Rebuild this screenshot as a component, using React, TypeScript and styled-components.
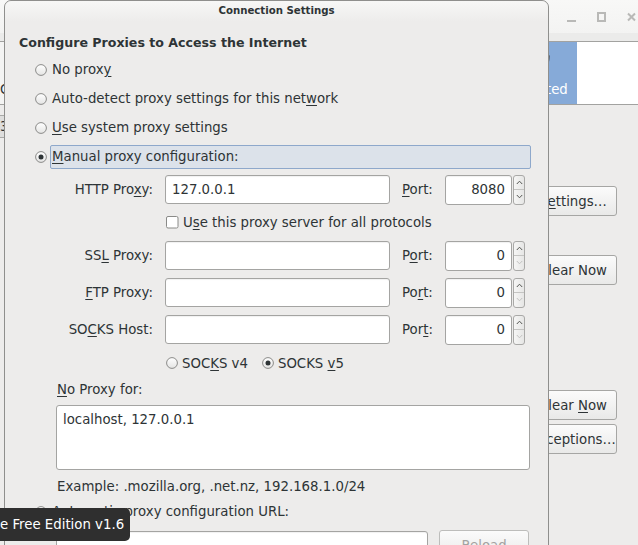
import React from 'react';
import styled, { createGlobalStyle } from 'styled-components';

const GlobalStyle = createGlobalStyle`
  html, body { margin: 0; padding: 0; }
  body {
    font-family: "DejaVu Sans", "Liberation Sans", sans-serif;
    font-size: 13.3px;
    color: #2e3436;
    background: #edeceb;
  }
`;

const Screen = styled.div`
  position: relative;
  width: 638px;
  height: 545px;
  overflow: hidden;
`;

/* ---------- background window ---------- */

const BgWindow = styled.div`
  display: flex;
  flex-direction: column;
  width: 638px;
  height: 545px;
  background: #edeceb;
`;

const BgTitle = styled.div`
  height: 33px;
  background: linear-gradient(#f8f8f7, #f3f3f2);
  display: flex;
  justify-content: flex-end;
  align-items: center;
  gap: 21px;
  padding-right: 2px;
`;

const BgStrip = styled.div`
  height: 8px;
  background: #ebebea;
`;

const BgList = styled.div`
  height: 62px;
  border-top: 1px solid #a2a2a0;
  border-bottom: 1px solid #a2a2a0;
  background: #fff;
  display: flex;
`;

const BgItem = styled.div<{ $selected?: boolean }>`
  width: ${p => (p.$selected ? '82px' : 'auto')};
  flex: ${p => (p.$selected ? 'none' : '1')};
  display: flex;
  flex-direction: column;
  align-items: ${p => (p.$selected ? 'center' : 'flex-start')};
  justify-content: flex-end;
  padding-bottom: 7px;
  gap: 3px;
  background: ${p => (p.$selected ? '#86aad8' : '#f4f4f3')};
  color: ${p => (p.$selected ? '#fff' : '#2e3436')};
`;

const BgBlank = styled.div`
  width: 61px;
  background: #fff;
`;

const BgBody = styled.div`
  flex: 1;
  display: flex;
`;

const BgMain = styled.div`
  flex: 1;
  padding-top: 10px;
`;

const BgTab = styled.div`
  width: 60px;
  height: 21px;
  border: 1px solid #a9a9a7;
  border-left: none;
  background: #dededd;
  line-height: 21px;
`;

const BgSide = styled.div`
  width: 88px;
  padding-right: 21px;
  display: flex;
  flex-direction: column;
`;

const Button = styled.div<{ $top: number; $disabled?: boolean }>`
  margin-top: ${p => p.$top}px;
  height: 28px;
  border: 1px solid ${p => (p.$disabled ? '#bdbdbb' : '#a6a6a4')};
  border-radius: 3px;
  background: linear-gradient(#fbfbfb, #e9e9e8);
  color: ${p => (p.$disabled ? '#a3a3a1' : '#2e3436')};
  display: flex;
  align-items: center;
  justify-content: center;
  white-space: nowrap;
`;

/* ---------- dialog ---------- */

const Dialog = styled.div`
  position: absolute;
  left: 4px;
  top: 0;
  width: 543px;
  height: 580px;
  border: 1px solid #8f8f8d;
  border-radius: 7px 7px 0 0;
  background: #edeceb;
  display: flex;
  flex-direction: column;
`;

const TitleBar = styled.div`
  height: 21px;
  border-radius: 7px 7px 0 0;
  background: linear-gradient(#f7f7f6, #edeceb);
  display: flex;
  justify-content: center;
  align-items: center;
  font-weight: bold;
  font-size: 10.2px;
  padding-bottom: 2px;
  box-sizing: border-box;
`;

const Body = styled.div`
  padding: 11px 17px 0 14px;
  display: flex;
  flex-direction: column;
`;

const Heading = styled.div`
  height: 20px;
  line-height: 20px;
  font-weight: bold;
  font-size: 12.6px;
  margin-bottom: 2px;
`;

const RadioRow = styled.div<{ $h?: number }>`
  height: ${p => p.$h ?? 29}px;
  display: flex;
  align-items: center;
  padding-left: 16px;
`;

const Label = styled.span<{ $focus?: boolean }>`
  margin-left: 3px;
  padding: 0 1px;
  height: 22px;
  line-height: 22px;
  border: 1px solid ${p => (p.$focus ? '#8ea8cb' : 'transparent')};
  border-radius: 2px;
  background: ${p => (p.$focus ? '#dce2ea' : 'transparent')};
  flex: ${p => (p.$focus ? '1' : 'none')};
  white-space: nowrap;
`;

const Key = styled.u`
  text-decoration: underline;
  text-underline-offset: 2px;
`;

const Manual = styled.div`
  padding: 4px 1px 0 37px;
  display: flex;
  flex-direction: column;
`;

const ProxyGrid = styled.div`
  display: grid;
  grid-template-columns: 97px 225px 31px 80px;
  grid-template-rows: 29px 21px 29px 29px 29px;
  column-gap: 12px;
  row-gap: 8px;
  align-items: center;
`;

const FieldLabel = styled.div`
  text-align: right;
  white-space: nowrap;
`;

const PortLabel = styled.div`
  white-space: nowrap;
`;

const Entry = styled.input.attrs({ type: 'text', readOnly: true })<{ $w?: number }>`
  box-sizing: border-box;
  width: ${p => (p.$w ? `${p.$w}px` : '100%')};
  height: 29px;
  border: 1px solid #a4a4a2;
  border-radius: 3px;
  background: #fff;
  box-shadow: inset 0 1px 1px rgba(0, 0, 0, 0.06);
  padding: 0 6px;
  font: inherit;
  color: #2e3436;
  outline: none;
`;

const Spin = styled.div`
  display: flex;
  gap: 1px;
  height: 30px;
  align-items: stretch;
`;

const SpinEntry = styled(Entry)`
  width: 67px;
  text-align: right;
  height: 30px;
`;

const SpinButtons = styled.div`
  width: 12px;
  border: 1px solid #a9a9a7;
  border-radius: 3px;
  background: linear-gradient(90deg, #f6f6f5, #e6e6e5);
  display: flex;
  flex-direction: column;
`;

const SpinHalf = styled.div<{ $bottom?: boolean }>`
  flex: 1;
  display: flex;
  align-items: center;
  justify-content: center;
  border-top: ${p => (p.$bottom ? '1px solid #c4c4c2' : 'none')};
`;

const CheckRow = styled.div`
  grid-column: 2 / 5;
  display: flex;
  align-items: center;
  padding-left: 1px;
  white-space: nowrap;
`;

const SocksRow = styled.div`
  margin-top: 8px;
  height: 22px;
  padding-left: 110px;
  display: flex;
  align-items: center;
  white-space: nowrap;
`;

const Choice = styled.span<{ $gap?: number }>`
  margin-left: 4px;
  margin-right: ${p => p.$gap ?? 0}px;
`;

const TextRow = styled.div<{ $top: number }>`
  margin-top: ${p => p.$top}px;
  height: 22px;
  line-height: 22px;
  padding-left: 1px;
`;

const NoProxyBox = styled.textarea.attrs({ readOnly: true })`
  box-sizing: border-box;
  margin-top: 4px;
  width: 474px;
  height: 65px;
  border: 1px solid #a4a4a2;
  border-radius: 3px;
  background: #fff;
  padding: 6px 6px;
  font: inherit;
  line-height: 16px;
  color: #2e3436;
  resize: none;
  outline: none;
`;

const UrlRow = styled.div`
  margin-top: 4px;
  padding-left: 37px;
  display: flex;
  align-items: flex-start;
  gap: 11px;
`;

const UrlEntry = styled(Entry)`
  margin-top: 1px;
`;

const ReloadButton = styled(Button)`
  width: 88px;
`;

const Tooltip = styled.div`
  position: absolute;
  left: -8px;
  top: 508px;
  height: 33px;
  padding: 0 6px 0 8px;
  border-radius: 5px;
  background: #2f2f2f;
  color: #fff;
  display: flex;
  align-items: center;
  white-space: nowrap;
`;

/* ---------- drawings ---------- */

const RadioIcon = ({ checked }: { checked?: boolean }) => (
  <svg width="12" height="12" viewBox="0 0 12 12" style={{ flex: 'none' }}>
    <defs>
      <linearGradient id="rg" x1="0" y1="0" x2="0" y2="1">
        <stop offset="0" stopColor="#ffffff" />
        <stop offset="1" stopColor="#e4e4e3" />
      </linearGradient>
    </defs>
    <circle cx="6" cy="6" r="5.4" fill="url(#rg)" stroke="#8a8a88" strokeWidth="1" />
    {checked && <circle cx="6" cy="6" r="2.5" fill="#2e3436" />}
  </svg>
);

const CheckIcon = () => (
  <svg width="13" height="13" viewBox="0 0 13 13" style={{ flex: 'none' }}>
    <rect x="0.5" y="0.5" width="11.5" height="11.5" rx="1.5" fill="#fff" stroke="#8a8a88" />
  </svg>
);

const Chevron = ({ up, dim }: { up?: boolean; dim?: boolean }) => (
  <svg width="7" height="5" viewBox="0 0 7 5">
    <path
      d={up ? 'M0.8 4 L3.5 1.2 L6.2 4' : 'M0.8 1 L3.5 3.8 L6.2 1'}
      fill="none"
      stroke={dim ? '#c2c2c0' : '#555753'}
      strokeWidth="1"
    />
  </svg>
);

const WinMin = () => (
  <svg width="9" height="10" viewBox="0 0 9 10">
    <rect x="0" y="8" width="9" height="2" fill="#b9b9b7" />
  </svg>
);
const WinMax = () => (
  <svg width="9" height="10" viewBox="0 0 9 10">
    <rect x="1" y="1" width="7" height="8" fill="none" stroke="#b9b9b7" strokeWidth="2" />
  </svg>
);
const WinClose = () => (
  <svg width="9" height="10" viewBox="0 0 9 10">
    <path d="M1 1.5 L8 8.5 M8 1.5 L1 8.5" stroke="#b9b9b7" strokeWidth="2" />
  </svg>
);

const ShieldIcon = () => (
  <svg width="34" height="30" viewBox="0 0 34 30">
    <path d="M17 3 L30 7 C30 16 25 23 17 27 C9 23 4 16 4 7 Z" fill="#eef2f7" stroke="#4b5560" strokeWidth="1.5" />
    <path d="M17 8 L24 10 C24 15 22 19 17 22 Z" fill="#6d7a88" />
  </svg>
);

function SpinBox({ value, atMin }: { value: string; atMin?: boolean }) {
  return (
    <Spin>
      <SpinEntry value={value} />
      <SpinButtons>
        <SpinHalf>
          <Chevron up />
        </SpinHalf>
        <SpinHalf $bottom>
          <Chevron dim={atMin} />
        </SpinHalf>
      </SpinButtons>
    </Spin>
  );
}

export default function App() {
  return (
    <Screen>
      <GlobalStyle />
      <BgWindow>
        <BgTitle>
          <WinMin />
          <WinMax />
          <WinClose />
        </BgTitle>
        <BgStrip />
        <BgList>
          <BgItem>Content</BgItem>
          <BgItem $selected>
            <ShieldIcon />
            <span>Protected</span>
          </BgItem>
          <BgBlank />
        </BgList>
        <BgBody>
          <BgMain>
            <BgTab>3G</BgTab>
          </BgMain>
          <BgSide>
            <Button $top={81}>
              <span>
                S<Key>e</Key>ttings…
              </span>
            </Button>
            <Button $top={39}>
              <span>Clear Now</span>
            </Button>
            <Button $top={105}>
              <span>
                Clear <Key>N</Key>ow
              </span>
            </Button>
            <Button $top={4}>
              <span>Exceptions…</span>
            </Button>
          </BgSide>
        </BgBody>
      </BgWindow>

      <Dialog>
        <TitleBar>Connection Settings</TitleBar>
        <Body>
          <Heading>Configure Proxies to Access the Internet</Heading>
          <RadioRow>
            <RadioIcon />
            <Label>
              No prox<Key>y</Key>
            </Label>
          </RadioRow>
          <RadioRow>
            <RadioIcon />
            <Label>
              Auto-detect proxy settings for this net<Key>w</Key>ork
            </Label>
          </RadioRow>
          <RadioRow>
            <RadioIcon />
            <Label>
              <Key>U</Key>se system proxy settings
            </Label>
          </RadioRow>
          <RadioRow>
            <RadioIcon checked />
            <Label $focus>
              <Key>M</Key>anual proxy configuration:
            </Label>
          </RadioRow>

          <Manual>
            <ProxyGrid>
              <FieldLabel>
                HTTP Pro<Key>x</Key>y:
              </FieldLabel>
              <Entry value="127.0.0.1" />
              <PortLabel>
                <Key>P</Key>ort:
              </PortLabel>
              <SpinBox value="8080" />

              <div />
              <CheckRow>
                <CheckIcon />
                <Choice>
                  U<Key>s</Key>e this proxy server for all protocols
                </Choice>
              </CheckRow>

              <FieldLabel>
                SS<Key>L</Key> Proxy:
              </FieldLabel>
              <Entry value="" />
              <PortLabel>
                P<Key>o</Key>rt:
              </PortLabel>
              <SpinBox value="0" atMin />

              <FieldLabel>
                <Key>F</Key>TP Proxy:
              </FieldLabel>
              <Entry value="" />
              <PortLabel>
                Po<Key>r</Key>t:
              </PortLabel>
              <SpinBox value="0" atMin />

              <FieldLabel>
                SO<Key>C</Key>KS Host:
              </FieldLabel>
              <Entry value="" />
              <PortLabel>
                Por<Key>t</Key>:
              </PortLabel>
              <SpinBox value="0" atMin />
            </ProxyGrid>

            <SocksRow>
              <RadioIcon />
              <Choice $gap={14}>
                SOC<Key>K</Key>S v4
              </Choice>
              <RadioIcon checked />
              <Choice>
                SOCKS <Key>v</Key>5
              </Choice>
            </SocksRow>

            <TextRow $top={5}>
              <Key>N</Key>o Proxy for:
            </TextRow>
            <NoProxyBox value="localhost, 127.0.0.1" />
            <TextRow $top={6}>Example: .mozilla.org, .net.nz, 192.168.1.0/24</TextRow>
          </Manual>

          <RadioRow $h={28}>
            <RadioIcon />
            <Label>
              <Key>A</Key>utomatic proxy configuration URL:
            </Label>
          </RadioRow>
          <UrlRow>
            <UrlEntry $w={372} value="" />
            <ReloadButton $top={0} $disabled>
              <span>Reload</span>
            </ReloadButton>
          </UrlRow>
        </Body>
      </Dialog>

      <Tooltip>e Free Edition v1.6</Tooltip>
    </Screen>
  );
}
